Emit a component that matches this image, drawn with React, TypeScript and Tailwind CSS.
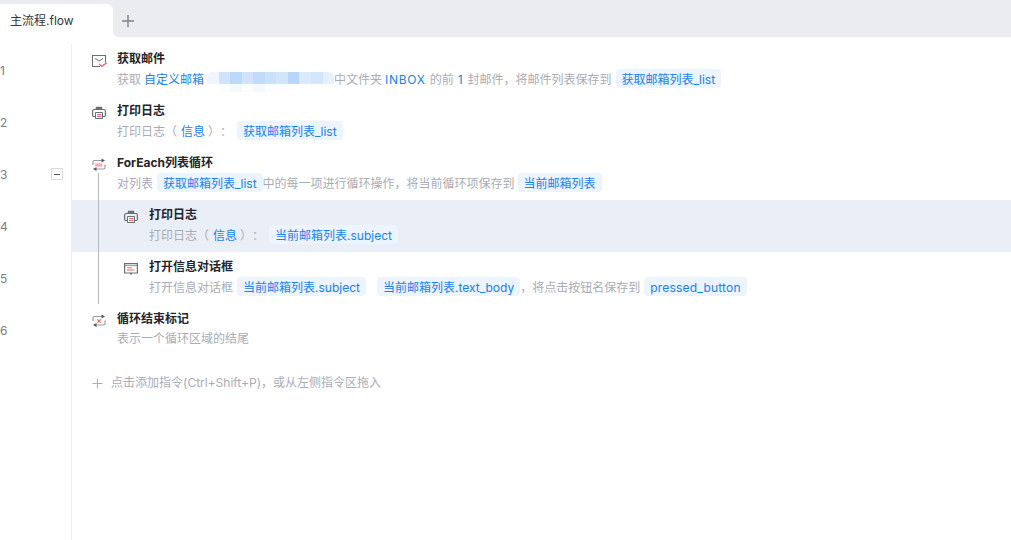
import React from "react";

const G = "#6b6e76";
const R = "#f0646e";

function MailIcon() {
  return (
    <svg width="16" height="16" viewBox="0 0 16 16" fill="none">
      <path d="M8 14.5H0.5V3.5H13.5V10.5" stroke={G} strokeWidth="1.1" />
      <path d="M3 6.5L7 9L11 6.5" stroke={G} strokeWidth="1" />
      <path d="M7.3 12L9.8 14.4L14.8 10.8" stroke={R} strokeWidth="1.4" />
    </svg>
  );
}
function PrintIcon() {
  return (
    <svg width="16" height="16" viewBox="0 0 16 16" fill="none">
      <path d="M3.5 5.5L4 2.8H10L10.5 5.5Z" fill={G} />
      <path d="M3 12.5H1.8C1 12.5 0.6 12 0.6 11.3V7C0.6 6 1.3 5.5 2 5.5H12C12.7 5.5 13.4 6 13.4 7V11.3C13.4 12 13 12.5 12.2 12.5H11" stroke={G} strokeWidth="1.2" />
      <path d="M3.5 8.5H10.5V14.5H3.5Z" stroke={G} strokeWidth="1" fill="#fff" />
      <path d="M5 10.5H9M5 12.5H9" stroke={R} strokeWidth="1" />
    </svg>
  );
}
function LoopIcon({ end }: { end?: boolean }) {
  return (
    <svg width="16" height="16" viewBox="0 0 16 16" fill="none">
      <path d="M1 9V6C1 5.1 1.6 4.5 2.5 4.5H10" stroke="#9a9ca3" strokeWidth="1.2" />
      <path d="M9.5 2.6L13 4.5L9.5 6.4Z" fill="#55585f" />
      <path d="M13 8.5V11.5C13 12.4 12.4 13 11.5 13H4" stroke="#9a9ca3" strokeWidth="1.2" />
      <path d="M4.5 11.1L1 13L4.5 14.9Z" fill="#55585f" />
      {end ? (
        <path d="M5.3 7.3L8.7 10.7M8.7 7.3L5.3 10.7" stroke={R} strokeWidth="1.2" />
      ) : (
        <>
          <path d="M3 6.8H10.5V11.2H3Z" fill="#fbd0d3" />
          <path d="M3.5 9H10" stroke={R} strokeWidth="1" opacity="0.7" />
        </>
      )}
    </svg>
  );
}
function DialogIcon() {
  return (
    <svg width="16" height="16" viewBox="0 0 16 16" fill="none">
      <path d="M0.6 3.6H13.4V13H0.6Z" stroke={G} strokeWidth="1.2" />
      <path d="M1 5.6H13" stroke={G} strokeWidth="0.7" />
      <path d="M6 13V14.6H8V13" fill={G} />
      <path d="M3 7.8H8M3 10H10.5" stroke={R} strokeWidth="1" />
    </svg>
  );
}

function Chip({ children, className = "" }: { children: React.ReactNode; className?: string }) {
  return (
    <span className={"-mt-[2px] inline-flex h-[19px] items-center rounded-[4px] bg-[#ebf4ff] px-[6px] pt-[2px] text-[#1a7ff0] " + className}>
      {children}
    </span>
  );
}
function B({ children, className = "" }: { children: React.ReactNode; className?: string }) {
  return <span className={"text-[#1a7ff0] " + className}>{children}</span>;
}

const smearTop = ["#eef5fe", "#cfe3fb", "#bdd9fa", "#d0e3fb", "#c2dbfa", "#cbe1fb", "#d3e5fb", "#b9d5f9", "#dbe9fc", "#d4e6fc", "#e6f0fd"];
const smearBottom = ["#ffffff", "#fcfdff", "#f5f9fe", "#fcfdff", "#f5f9fe", "#fbfcff", "#fcfdff", "#fdfeff", "#ffffff", "#ffffff", "#ffffff"];

function Smear() {
  return (
    <span className="mt-px ml-[3px] flex h-[20px] w-[127px] flex-col self-start overflow-hidden rounded-[6px]">
      <span className="flex h-[12px]">
        {smearTop.map((c, i) => (
          <span key={i} className="h-full flex-1" style={{ backgroundColor: c }} />
        ))}
      </span>
      <span className="flex h-[8px]">
        {smearBottom.map((c, i) => (
          <span key={i} className="h-full flex-1" style={{ backgroundColor: c }} />
        ))}
      </span>
    </span>
  );
}

function Row({
  n,
  icon,
  title,
  nested,
  active,
  fold,
  children,
}: {
  n: number;
  icon: React.ReactNode;
  title: string;
  nested?: boolean;
  active?: boolean;
  fold?: boolean;
  children: React.ReactNode;
}) {
  return (
    <div className="flex h-[52px]">
      <div className="flex w-[72px] shrink-0 items-center justify-between border-r border-[#eeeff2] pr-[8px] text-[12px] text-[#7a7d85]">
        <span className="pt-[1px]">{n}</span>
        {fold && (
          <span className="flex h-[12px] w-[12px] items-center justify-center border border-[#d9dade] bg-white">
            <span className="h-px w-[6px] bg-[#555]" />
          </span>
        )}
      </div>
      <div className={"flex flex-1 pt-[6px] " + (nested ? "pl-[52px] " : "pl-[20px] ") + (active ? "bg-[#e9eef7]" : "")}>
        <div className="w-[25px] shrink-0 pt-[2px]">{icon}</div>
        <div className="flex flex-col">
          <div className="h-[19px] text-[12px] leading-[17px] font-bold text-[#23252b]">{title}</div>
          <div className="flex h-[19px] items-center whitespace-pre pt-[2px] text-[12px] text-[#a9acb6] [text-spacing-trim:space-all]">
            {children}
          </div>
        </div>
      </div>
    </div>
  );
}

export default function App() {
  return (
    <div
      className="relative flex h-[540px] w-[1011px] flex-col overflow-hidden bg-white"
      style={{ fontFamily: 'Inter, "Noto Sans CJK SC", sans-serif' }}
    >
      <div className="flex h-[37px] shrink-0">
        <div className="h-full w-[113px] bg-[#ebecf0] pt-[4px]">
          <div className="flex h-full items-center rounded-tr-[6px] bg-white pl-[10px] text-[12px] text-[#33353b]">
            主流程.flow
          </div>
        </div>
        <div className="flex flex-1 rounded-bl-[5px] bg-[#ebecf0] pt-[4px]">
          <div className="flex h-[33px] w-[30px] items-center justify-center">
            <svg width="14" height="14" viewBox="0 0 14 14" fill="none">
              <path d="M7 1V13M1 7H13" stroke="#7e828c" strokeWidth="1.4" />
            </svg>
          </div>
        </div>
      </div>
      <div className="h-[7px] shrink-0" />
      <Row n={1} icon={<MailIcon />} title="获取邮件">
        <span>获取</span>
        <B className="ml-[3px]">自定义邮箱</B>
        <Smear />
        <span>中文件夹</span>
        <B className="ml-[3px] tracking-[0.7px]">INBOX</B>
        <span className="ml-[4px]">的前</span>
        <B className="ml-[4px]">1</B>
        <span className="ml-[5px]">封邮件，将邮件列表保存到</span>
        <Chip className="ml-[4px]">获取邮箱列表_list</Chip>
      </Row>
      <Row n={2} icon={<PrintIcon />} title="打印日志">
        <span>打印日志（</span>
        <B className="ml-[4px]">信息</B>
        <span className="ml-[3px]">）：</span>
        <Chip className="ml-[5px]">获取邮箱列表_list</Chip>
      </Row>
      <Row n={3} fold icon={<LoopIcon />} title="ForEach列表循环">
        <span>对列表</span>
        <Chip className="ml-[4px]">获取邮箱列表_list</Chip>
        <span>中的每一项进行循环操作，将当前循环项保存到</span>
        <Chip className="ml-[3px]">当前邮箱列表</Chip>
      </Row>
      <Row n={4} nested active icon={<PrintIcon />} title="打印日志">
        <span>打印日志（</span>
        <B className="ml-[4px]">信息</B>
        <span className="ml-[3px]">）：</span>
        <Chip className="ml-[5px]">当前邮箱列表.subject</Chip>
      </Row>
      <Row n={5} nested icon={<DialogIcon />} title="打开信息对话框">
        <span>打开信息对话框</span>
        <Chip className="ml-[4px]">当前邮箱列表.subject</Chip>
        <Chip className="ml-[11px]">当前邮箱列表.text_body</Chip>
        <span>，将点击按钮名保存到</span>
        <Chip className="ml-[4px] tracking-[0.2px]">pressed_button</Chip>
      </Row>
      <Row n={6} icon={<LoopIcon end />} title="循环结束标记">
        <span className="-mt-[2px]">表示一个循环区域的结尾</span>
      </Row>
      <div className="flex flex-1">
        <div className="w-[72px] shrink-0 border-r border-[#eeeff2]" />
        <div className="flex h-fit items-center gap-[8px] pt-[18px] pl-[20px] text-[12px] text-[#a9acb6]">
          <svg width="11" height="11" viewBox="0 0 11 11" fill="none">
            <path d="M5.5 0.5V10.5M0.5 5.5H10.5" stroke="#a9acb6" strokeWidth="1" />
          </svg>
          点击添加指令(Ctrl+Shift+P)，或从左侧指令区拖入
        </div>
      </div>
      <div className="absolute top-[173px] left-[98px] h-[131px] w-px bg-[#b5b8c0]" />
    </div>
  );
}
